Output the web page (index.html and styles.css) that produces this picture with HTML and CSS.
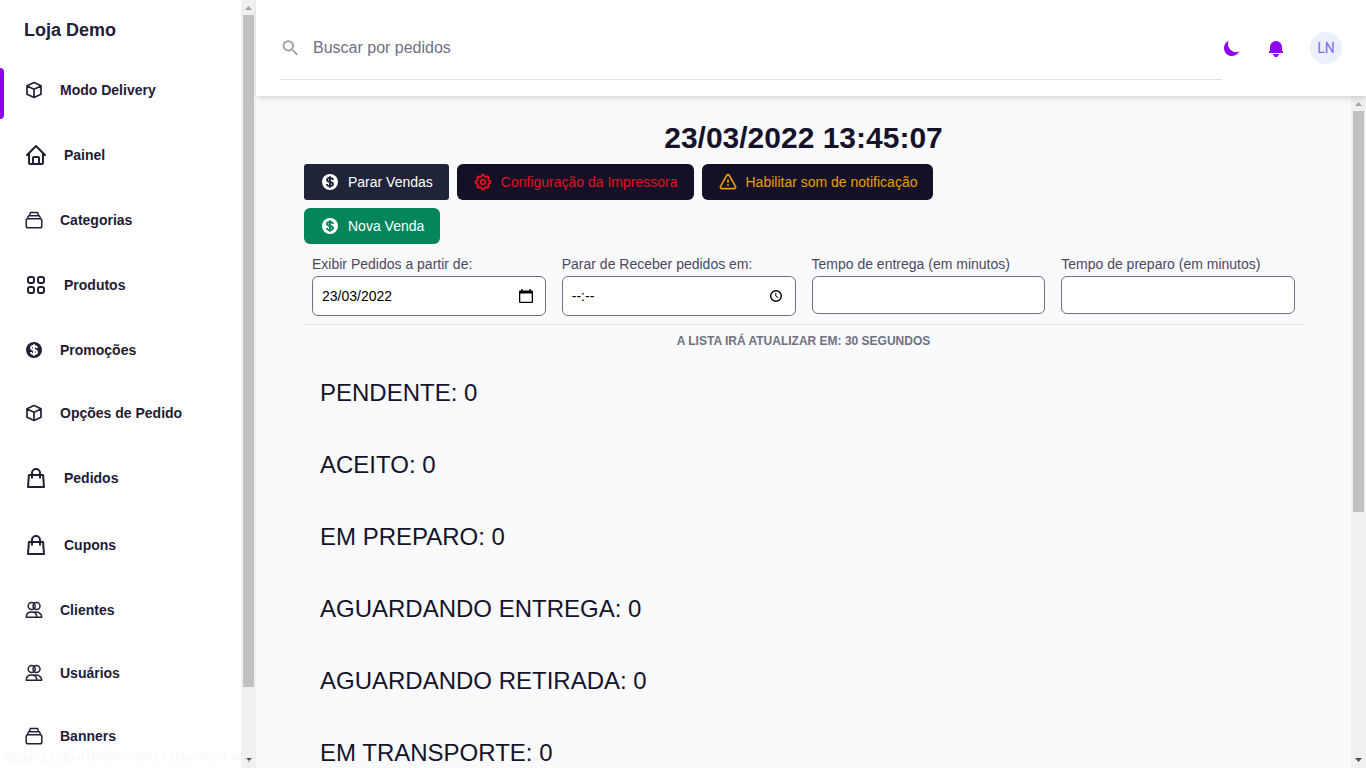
FILE: index.html
```html
<!DOCTYPE html>
<html lang="pt-BR">
<head>
<meta charset="utf-8">
<title>Loja Demo</title>
<link rel="stylesheet" href="styles.css">
</head>
<body>
<svg class="sprite" aria-hidden="true">
  <symbol id="cube" viewBox="0 0 20 20"><path d="M10 2.600l7 3.200v8.400L10 17.400l-7-3.200V5.800zM3 6l7 3.200L17 6M10 9.200v8.200" fill="none" stroke="currentColor" stroke-width="1.700" stroke-linejoin="round"/></symbol>
  <symbol id="home" viewBox="0 0 24 24"><path fill="currentColor" d="M3 13h1v7c0 1.103.897 2 2 2h12c1.103 0 2-.897 2-2v-7h1a1 1 0 0 0 .707-1.707l-9-9a.999.999 0 0 0-1.414 0l-9 9A1 1 0 0 0 3 13zm7 7v-5h4v5h-4zm2-15.586 6 6V15l.001 5H16v-5c0-1.103-.897-2-2-2h-4c-1.103 0-2 .897-2 2v5H6v-9.586l6-6z"/></symbol>
  <symbol id="stack" viewBox="0 0 20 20"><g fill="none" stroke="currentColor" stroke-width="1.500" stroke-linejoin="round"><rect x="2.200" y="8.800" width="15.600" height="9" rx="1.800"/><path d="M3.300 8.800 4.600 5.800h10.800l1.300 3M5.600 5.600 6.300 2.600h7.400l.7 3"/></g></symbol>
  <symbol id="grid" viewBox="0 0 24 24"><g fill="none" stroke="currentColor" stroke-width="2"><rect x="4" y="4" width="6" height="6" rx="2"/><rect x="14" y="4" width="6" height="6" rx="2"/><rect x="4" y="14" width="6" height="6" rx="2"/><rect x="14" y="14" width="6" height="6" rx="2"/></g></symbol>
  <symbol id="coin" viewBox="0 0 20 20"><mask id="coin-cut"><rect width="20" height="20" fill="#fff"/><path d="M10 4.200v11.600M13 8c-.2-1.200-1.300-2-3-2s-3 .7-3 2c0 1.400 1.300 1.700 3 2s3 .7 3 2.100-1.300 2-3 2-3-.8-3.100-2.100" fill="none" stroke="#000" stroke-width="1.900"/></mask><circle cx="10" cy="10" r="8" fill="currentColor" mask="url(#coin-cut)"/></symbol>
  <symbol id="bag" viewBox="0 0 24 24"><path d="M4.900 9h14.200L20 21H4zM8 12.500V7a4 4 0 0 1 8 0v5.500" fill="none" stroke="currentColor" stroke-width="2" stroke-linejoin="round"/></symbol>
  <symbol id="people" viewBox="0 0 20 20"><g fill="none" stroke="currentColor" stroke-width="1.500" stroke-linejoin="round"><circle cx="7.700" cy="6" r="3.500"/><circle cx="12.500" cy="6" r="3.500"/><path d="M2.300 17.300c0-3.400 2.300-5.200 5.300-5.200s5.200 1.800 5.200 5.200zM9.800 12.600c3.900-1.500 7.900.6 7.900 4.700h-4.900"/></g></symbol>
  <symbol id="search" viewBox="0 0 24 24"><path fill="currentColor" d="M15.500 14h-.79l-.28-.27A6.471 6.471 0 0 0 16 9.500 6.500 6.500 0 1 0 9.500 16c1.610 0 3.090-.59 4.230-1.570l.27.28v.79l5 4.990L20.490 19l-4.990-5zm-6 0C7.010 14 5 11.990 5 9.500S7.010 5 9.500 5 14 7.010 14 9.500 11.990 14 9.500 14z"/></symbol>
  <symbol id="moon" viewBox="0 0 20 20"><path fill="currentColor" d="M17.293 13.293A8 8 0 0 1 6.707 2.707a8.001 8.001 0 1 0 10.586 10.586z"/></symbol>
  <symbol id="bell" viewBox="0 0 20 20"><path fill="currentColor" d="M10 3a6 6 0 0 0-6 6v4.200H3V15h14v-1.800h-1V9a6 6 0 0 0-6-6zM7 16h6v1.200h-1a2 2 0 0 1-4 0H7z"/></symbol>
  <symbol id="gear" viewBox="0 0 20 20"><g fill="none" stroke="currentColor" stroke-width="1.800" stroke-linejoin="round"><path d="M8.300 4.600 9 2.800h2l.7 1.800 1.100.5 1.800-.8 1.300 1.300-.8 1.800.5 1.100 1.800.6v2l-1.800.6-.5 1.100.8 1.800-1.300 1.300-1.800-.8-1.100.5-.7 1.700H9l-.7-1.700-1.100-.5-1.800.8-1.300-1.300.8-1.800-.5-1.100-1.700-.6v-2l1.700-.6.5-1.100-.8-1.800 1.300-1.300 1.800.8z"/><circle cx="10" cy="10" r="2.400"/></g></symbol>
  <symbol id="alert" viewBox="0 0 20 20"><g fill="none" stroke="currentColor" stroke-width="1.700" stroke-linejoin="round"><path d="M8.700 3.400 2.600 14.300a1.500 1.500 0 0 0 1.300 2.300h12.200a1.500 1.500 0 0 0 1.300-2.300L11.300 3.400a1.500 1.500 0 0 0-2.600 0z"/><path d="M10 7.500v3.200M10 12.200v1.800"/></g></symbol>
  <symbol id="calendar" viewBox="0 0 16 16"><path fill="currentColor" d="M2 2.400h1.300V1h1.400v1.400h6.600V1h1.400v1.400H14a1 1 0 0 1 1 1V14a1 1 0 0 1-1 1H2a1 1 0 0 1-1-1V3.400a1 1 0 0 1 1-1zM2.300 5.600v8.100h11.400V5.600z"/></symbol>
  <symbol id="clock" viewBox="0 0 16 16"><g fill="none" stroke="currentColor"><circle cx="8" cy="8" r="5.300" stroke-width="1.400"/><path d="M7.800 4.800v3.400l2.500 1.500"/></g></symbol>
  <symbol id="up" viewBox="0 0 7 4"><path d="M3.500 0 7 4H0z" fill="currentColor"/></symbol>
  <symbol id="down" viewBox="0 0 7 4"><path d="M3.500 4 7 0H0z" fill="currentColor"/></symbol>
</svg>

<aside class="sidebar">
  <div class="sidebar-body">
    <a class="brand" href="#">Loja Demo</a>
    <nav>
      <ul class="menu">
        <li class="menu-item active"><a href="#"><svg class="icon"><use href="#cube"/></svg>Modo Delivery</a></li>
        <li class="menu-item"><a href="#"><svg class="icon large"><use href="#home"/></svg>Painel</a></li>
        <li class="menu-item"><a href="#"><svg class="icon"><use href="#stack"/></svg>Categorias</a></li>
        <li class="menu-item"><a href="#"><svg class="icon large"><use href="#grid"/></svg>Produtos</a></li>
        <li class="menu-item"><a href="#"><svg class="icon"><use href="#coin"/></svg>Promoções</a></li>
        <li class="menu-item"><a href="#"><svg class="icon"><use href="#cube"/></svg>Opções de Pedido</a></li>
        <li class="menu-item"><a href="#"><svg class="icon large"><use href="#bag"/></svg>Pedidos</a></li>
        <li class="menu-item"><a href="#"><svg class="icon large"><use href="#bag"/></svg>Cupons</a></li>
        <li class="menu-item"><a href="#"><svg class="icon"><use href="#people"/></svg>Clientes</a></li>
        <li class="menu-item"><a href="#"><svg class="icon"><use href="#people"/></svg>Usuários</a></li>
        <li class="menu-item"><a href="#"><svg class="icon"><use href="#stack"/></svg>Banners</a></li>
      </ul>
    </nav>
  </div>
  <div class="scrollbar" aria-hidden="true">
    <svg class="arrow muted"><use href="#up"/></svg>
    <div class="track"><div class="thumb menu-thumb"></div></div>
    <svg class="arrow"><use href="#down"/></svg>
  </div>
</aside>

<div class="page">
  <header class="topbar">
    <form class="search">
      <svg class="search-icon"><use href="#search"/></svg>
      <input type="text" placeholder="Buscar por pedidos" aria-label="Buscar por pedidos">
    </form>
    <div class="actions">
      <button type="button" aria-label="Modo escuro"><svg class="icon"><use href="#moon"/></svg></button>
      <button type="button" aria-label="Notificações"><svg class="icon"><use href="#bell"/></svg></button>
      <button type="button" class="avatar">LN</button>
    </div>
  </header>

  <div class="viewport">
    <main class="content">
      <h1>23/03/2022 13:45:07</h1>
      <div class="buttons">
        <button type="button" class="btn slate"><svg class="icon"><use href="#coin"/></svg>Parar Vendas</button>
        <button type="button" class="btn danger"><svg class="icon"><use href="#gear"/></svg>Configuração da Impressora</button>
        <button type="button" class="btn warning"><svg class="icon"><use href="#alert"/></svg>Habilitar som de notificação</button>
      </div>
      <div class="buttons">
        <button type="button" class="btn success"><svg class="icon"><use href="#coin"/></svg>Nova Venda</button>
      </div>
      <div class="filters">
        <div class="field">
          <label for="from">Exibir Pedidos a partir de:</label>
          <div class="control"><input class="picker" id="from" type="text" value="23/03/2022"><svg class="picker-icon"><use href="#calendar"/></svg></div>
        </div>
        <div class="field">
          <label for="stop">Parar de Receber pedidos em:</label>
          <div class="control"><input class="picker" id="stop" type="text" value="--:--"><svg class="picker-icon"><use href="#clock"/></svg></div>
        </div>
        <div class="field">
          <label for="delivery">Tempo de entrega (em minutos)</label>
          <input id="delivery" type="text">
        </div>
        <div class="field">
          <label for="prep">Tempo de preparo (em minutos)</label>
          <input id="prep" type="text">
        </div>
      </div>
      <p class="refresh">A LISTA IRÁ ATUALIZAR EM: 30 SEGUNDOS</p>
      <section class="statuses">
        <h2>PENDENTE: 0</h2>
        <h2>ACEITO: 0</h2>
        <h2>EM PREPARO: 0</h2>
        <h2>AGUARDANDO ENTREGA: 0</h2>
        <h2>AGUARDANDO RETIRADA: 0</h2>
        <h2>EM TRANSPORTE: 0</h2>
      </section>
    </main>
    <div class="scrollbar" aria-hidden="true">
      <svg class="arrow muted"><use href="#up"/></svg>
      <div class="track"><div class="thumb list-thumb"></div></div>
      <svg class="arrow"><use href="#down"/></svg>
    </div>
  </div>
</div>
<div class="loading">Aguardando d18vf9xvnf8637.cloudfront.net...</div>
</body>
</html>
```

FILE: styles.css
```css
* { box-sizing: border-box; }

body {
  margin: 0;
  height: 100vh;
  display: flex;
  overflow: hidden;
  background: #f9fafc;
  color: #16122a;
  font-family: "Liberation Sans", Arial, sans-serif;
  font-size: 14px;
  line-height: 20px;
}

h1, h2, p, ul { margin: 0; padding: 0; }
a { color: inherit; text-decoration: none; }
button, input { font: inherit; }
button { border: 0; padding: 0; background: none; cursor: pointer; }

.sprite { position: absolute; width: 0; height: 0; }
.icon { display: block; flex: none; width: 20px; height: 20px; }
.icon.large { width: 24px; height: 24px; }

/* Sidebar */
.sidebar {
  flex: none;
  width: 256px;
  display: flex;
  background: #fff;
  overflow: hidden;
}
.sidebar-body { flex: 1; min-width: 0; padding-top: 16px; }
.brand {
  display: block;
  padding: 0 24px;
  font-size: 18px;
  line-height: 28px;
  font-weight: 700;
  color: #1f2037;
}
.menu { list-style: none; padding-top: 14px; }
.menu-item { position: relative; }
.menu-item a {
  display: flex;
  align-items: center;
  gap: 16px;
  padding: 22px 24px 21px;
  font-weight: 700;
  color: #1f1b36;
}
.menu-item .icon { color: #1f2236; }
.menu-item.active::before {
  content: "";
  position: absolute;
  left: 0;
  top: 10px;
  bottom: 2px;
  width: 4px;
  border-radius: 0 4px 4px 0;
  background: #9000f0;
}

/* Scrollbars */
.scrollbar {
  flex: none;
  width: 15px;
  display: flex;
  flex-direction: column;
  align-items: center;
  justify-content: space-between;
  background: #f0f0f0;
  padding: 6px 2px;
}
.arrow { flex: none; width: 7px; height: 4px; color: #505050; }
.arrow.muted { color: #a3a3a3; }
.track { flex: 1; width: 100%; margin: 5px 0; }
.thumb { background: #c1c1c1; }
.menu-thumb { height: 91%; }
.list-thumb { height: 62.5%; }

/* Top bar */
.page { flex: 1; min-width: 0; display: flex; flex-direction: column; }
.topbar {
  position: relative;
  flex: none;
  display: flex;
  align-items: center;
  padding: 16px 24px;
  background: #fff;
  box-shadow: 0 4px 6px -1px rgba(0, 0, 0, .1), 0 2px 4px -1px rgba(0, 0, 0, .06);
}
.search {
  flex: 1;
  display: flex;
  align-items: center;
  height: 64px;
  border-bottom: 1px solid #e2e2e5;
}
.search-icon { flex: none; width: 21px; height: 22px; color: #9e9eae; }
.search input {
  flex: 1;
  min-width: 0;
  border: 0;
  outline: 0;
  padding: 8px 12px;
  font-size: 16px;
  line-height: 24px;
  background: none;
}
.search input::placeholder { color: #707083; opacity: 1; }
.actions { display: flex; align-items: center; gap: 24px; color: #9000f0; }
.actions button { color: inherit; }
.actions .avatar {
  width: 32px;
  height: 32px;
  border-radius: 50%;
  background: #ebf0ff;
  color: #8a62ff;
  font-family: Roboto, sans-serif;
  font-size: 14px;
}

/* Content */
.viewport { flex: 1; min-height: 0; display: flex; }
.content { flex: 1; min-width: 0; padding: 24px 48px; overflow: hidden; }
h1 {
  text-align: center;
  font-size: 30px;
  line-height: 36px;
  font-weight: 700;
  margin-bottom: 8px;
}
.buttons { display: flex; gap: 8px; margin-bottom: 8px; }
.btn {
  display: flex;
  align-items: center;
  gap: 8px;
  padding: 8px 16px;
  border-radius: 6px;
  color: #fff;
}
.slate { background: #20243a; border-radius: 3px; }
.danger { background: #141027; color: #e1141e; }
.warning { background: #141027; color: #e5a000; }
.success { background: #04855c; }

.filters {
  display: grid;
  grid-template-columns: repeat(4, 1fr);
  align-items: start;
  border-bottom: 1px solid #e2e3e6;
}
.field { padding: 2px 8px 8px; }
.field label { display: block; color: #4c4860; }
.field input {
  display: block;
  width: 100%;
  height: 38px;
  margin-top: 2px;
  padding: 8px;
  border: 1px solid #707083;
  border-radius: 6px;
  background: #fff;
  color: #000;
}
.control { position: relative; }
.field .picker { height: 40px; padding: 8px 9px; }
.picker-icon {
  position: absolute;
  right: 12px;
  top: 12px;
  width: 16px;
  height: 16px;
  color: #000;
}
.refresh {
  padding-top: 8px;
  text-align: center;
  font-size: 12px;
  line-height: 16px;
  font-weight: 700;
  color: #707083;
}
.statuses { padding: 8px 16px; }
h2 { font-size: 24px; line-height: 32px; font-weight: 400; padding: 20px 0; }

/* Fading network status bubble */
.loading {
  position: fixed;
  left: 0;
  bottom: 0;
  padding: 1px 5px;
  font-family: "Open Sans", sans-serif;
  font-size: 12px;
  line-height: 20px;
  color: #f7f7f7;
  pointer-events: none;
}
```
